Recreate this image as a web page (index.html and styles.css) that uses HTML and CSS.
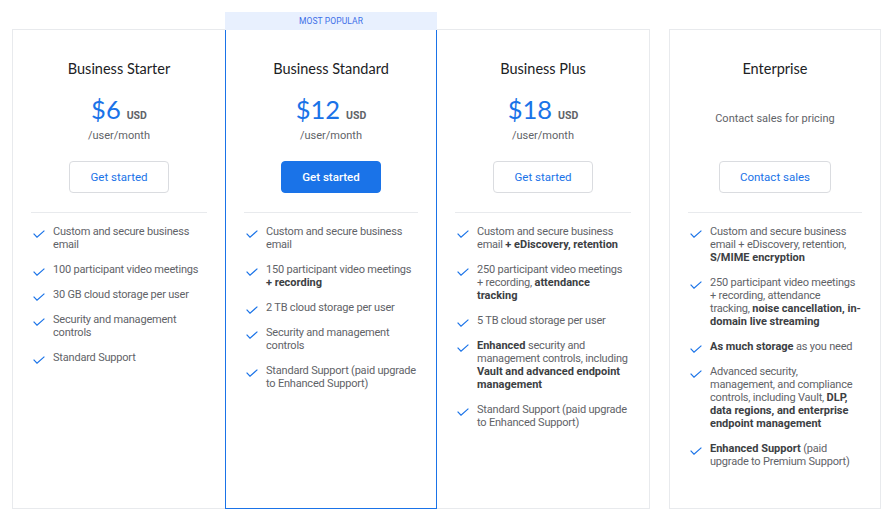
FILE: index.html
```html
<!DOCTYPE html>
<html lang="en">
<head>
<meta charset="utf-8">
<title>Google Workspace pricing</title>
<link rel="stylesheet" href="styles.css">
</head>
<body>
<main class="plans">
  <section class="group">
    <article class="card">
      <h2 class="title">Business Starter</h2>
      <div class="price-block">
        <div class="price"><span class="amount">$6</span><span class="cur">USD</span></div>
        <div class="per">/user/month</div>
      </div>
      <a class="btn">Get started</a>
      <hr class="divider">
      <ul class="features">
        <li><svg class="check" viewBox="0 0 12 8"><path d="M0.6 3.6 L4 7.2 L11.4 0.6"/></svg><span>Custom and secure business email</span></li>
        <li><svg class="check" viewBox="0 0 12 8"><path d="M0.6 3.6 L4 7.2 L11.4 0.6"/></svg><span>100 participant video meetings</span></li>
        <li><svg class="check" viewBox="0 0 12 8"><path d="M0.6 3.6 L4 7.2 L11.4 0.6"/></svg><span>30 GB cloud storage per user</span></li>
        <li><svg class="check" viewBox="0 0 12 8"><path d="M0.6 3.6 L4 7.2 L11.4 0.6"/></svg><span>Security and management controls</span></li>
        <li><svg class="check" viewBox="0 0 12 8"><path d="M0.6 3.6 L4 7.2 L11.4 0.6"/></svg><span>Standard Support</span></li>
      </ul>
    </article>
    <article class="card card-popular">
      <div class="badge">MOST POPULAR</div>
      <h2 class="title">Business Standard</h2>
      <div class="price-block">
        <div class="price"><span class="amount">$12</span><span class="cur">USD</span></div>
        <div class="per">/user/month</div>
      </div>
      <a class="btn btn-primary">Get started</a>
      <hr class="divider">
      <ul class="features">
        <li><svg class="check" viewBox="0 0 12 8"><path d="M0.6 3.6 L4 7.2 L11.4 0.6"/></svg><span>Custom and secure business email</span></li>
        <li><svg class="check" viewBox="0 0 12 8"><path d="M0.6 3.6 L4 7.2 L11.4 0.6"/></svg><span>150 participant video meetings <b>+&nbsp;recording</b></span></li>
        <li><svg class="check" viewBox="0 0 12 8"><path d="M0.6 3.6 L4 7.2 L11.4 0.6"/></svg><span>2 TB cloud storage per user</span></li>
        <li><svg class="check" viewBox="0 0 12 8"><path d="M0.6 3.6 L4 7.2 L11.4 0.6"/></svg><span>Security and management controls</span></li>
        <li><svg class="check" viewBox="0 0 12 8"><path d="M0.6 3.6 L4 7.2 L11.4 0.6"/></svg><span>Standard Support (paid upgrade to Enhanced Support)</span></li>
      </ul>
    </article>
    <article class="card">
      <h2 class="title">Business Plus</h2>
      <div class="price-block">
        <div class="price"><span class="amount">$18</span><span class="cur">USD</span></div>
        <div class="per">/user/month</div>
      </div>
      <a class="btn">Get started</a>
      <hr class="divider">
      <ul class="features">
        <li><svg class="check" viewBox="0 0 12 8"><path d="M0.6 3.6 L4 7.2 L11.4 0.6"/></svg><span>Custom and secure business email <b>+ eDiscovery, retention</b></span></li>
        <li><svg class="check" viewBox="0 0 12 8"><path d="M0.6 3.6 L4 7.2 L11.4 0.6"/></svg><span>250 participant video meetings +&nbsp;recording, <b>attendance tracking</b></span></li>
        <li><svg class="check" viewBox="0 0 12 8"><path d="M0.6 3.6 L4 7.2 L11.4 0.6"/></svg><span>5 TB cloud storage per user</span></li>
        <li><svg class="check" viewBox="0 0 12 8"><path d="M0.6 3.6 L4 7.2 L11.4 0.6"/></svg><span><b>Enhanced</b> security and management controls, including <b>Vault and advanced endpoint management</b></span></li>
        <li><svg class="check" viewBox="0 0 12 8"><path d="M0.6 3.6 L4 7.2 L11.4 0.6"/></svg><span>Standard Support (paid upgrade to Enhanced Support)</span></li>
      </ul>
    </article>
  </section>
  <article class="card card-solo">
    <h2 class="title">Enterprise</h2>
    <div class="price-block">
      <div class="contact">Contact sales for pricing</div>
    </div>
    <a class="btn">Contact sales</a>
    <hr class="divider">
    <ul class="features">
      <li><svg class="check" viewBox="0 0 12 8"><path d="M0.6 3.6 L4 7.2 L11.4 0.6"/></svg><span>Custom and secure business email + eDiscovery, retention, <b>S/MIME encryption</b></span></li>
      <li><svg class="check" viewBox="0 0 12 8"><path d="M0.6 3.6 L4 7.2 L11.4 0.6"/></svg><span>250 participant video meetings +&nbsp;recording, attendance tracking, <b>noise cancellation, in-domain live streaming</b></span></li>
      <li><svg class="check" viewBox="0 0 12 8"><path d="M0.6 3.6 L4 7.2 L11.4 0.6"/></svg><span><b>As much storage</b> as you need</span></li>
      <li><svg class="check" viewBox="0 0 12 8"><path d="M0.6 3.6 L4 7.2 L11.4 0.6"/></svg><span>Advanced security, management, and compliance controls, including Vault, <b>DLP, data regions, and enterprise endpoint management</b></span></li>
      <li><svg class="check" viewBox="0 0 12 8"><path d="M0.6 3.6 L4 7.2 L11.4 0.6"/></svg><span><b>Enhanced Support</b> (paid upgrade to Premium Support)</span></li>
    </ul>
  </article>
</main>
</body>
</html>
```

FILE: styles.css
```css
* { box-sizing: border-box; }

html, body {
  margin: 0;
  padding: 0;
  background: #ffffff;
}

body {
  font-family: Roboto, "Liberation Sans", Arial, sans-serif;
  color: #5f6368;
  width: 896px;
  height: 520px;
  overflow: hidden;
}

.plans {
  display: flex;
  gap: 19px;
  padding: 29px 0 0 12px;
  align-items: flex-start;
}

.group {
  display: grid;
  grid-template-columns: 212px 212px 212px;
  border: 1px solid #e8eaed;
  height: 480px;
}

.card {
  display: flex;
  flex-direction: column;
  padding: 29px 18px 0;
  position: relative;
}

.card-popular {
  border: 1px solid #1a73e8;
  margin: -1px 0;
  padding: 29px 18px 0;
}

.card-solo {
  width: 212px;
  height: 480px;
  border: 1px solid #e8eaed;
}

.badge {
  position: absolute;
  left: -1px;
  right: -1px;
  bottom: 100%;
  height: 18px;
  background: #e8f0fe;
  color: #3d6fe8;
  font-size: 8.5px;
  line-height: 18px;
  text-align: center;
  letter-spacing: 0.1px;
}

.title {
  margin: 0;
  font-family: Lato, Roboto, sans-serif;
  font-weight: 400;
  font-size: 14.5px;
  line-height: 20px;
  color: #202124;
  text-align: center;
}

.price-block {
  margin-top: 15px;
  height: 48px;
  display: flex;
  flex-direction: column;
  align-items: center;
  justify-content: flex-start;
}

.price {
  display: flex;
  align-items: baseline;
  gap: 6px;
  height: 30px;
  line-height: 30px;
}

.amount {
  font-family: Lato, Roboto, sans-serif;
  font-size: 25.5px;
  color: #1a73e8;
}

.cur {
  font-size: 10.5px;
  font-weight: 700;
  color: #5f6368;
}

.per {
  margin-top: 5px;
  font-size: 11px;
  line-height: 14px;
  color: #5f6368;
}

.contact {
  font-size: 11px;
  line-height: 14px;
  margin-top: 18px;
  color: #5f6368;
}

.btn {
  align-self: center;
  margin-top: 19px;
  height: 32px;
  padding: 0 20px;
  border: 1px solid #dadce0;
  border-radius: 4px;
  font-size: 11.5px;
  font-weight: 400;
  line-height: 30px;
  color: #1a73e8;
  background: #ffffff;
  white-space: nowrap;
}

.btn-primary {
  background: #1a73e8;
  border-color: #1a73e8;
  color: #ffffff;
  font-weight: 500;
}

.divider {
  margin: 19px 0 0;
  border: 0;
  border-top: 1px solid #e8eaed;
  height: 0;
}

.features {
  list-style: none;
  margin: 12px 0 0;
  padding: 0;
  display: flex;
  flex-direction: column;
  gap: 12px;
}

.features li {
  display: flex;
  font-size: 11px;
  line-height: 13px;
  letter-spacing: -0.2px;
  color: #5f6368;
}

.features b {
  font-weight: 700;
  letter-spacing: 0;
  color: #3c4043;
}

.check {
  flex: none;
  width: 12px;
  height: 8px;
  margin: 5px 8px 0 2px;
  fill: none;
  stroke: #1a73e8;
  stroke-width: 1.2;
}
```
